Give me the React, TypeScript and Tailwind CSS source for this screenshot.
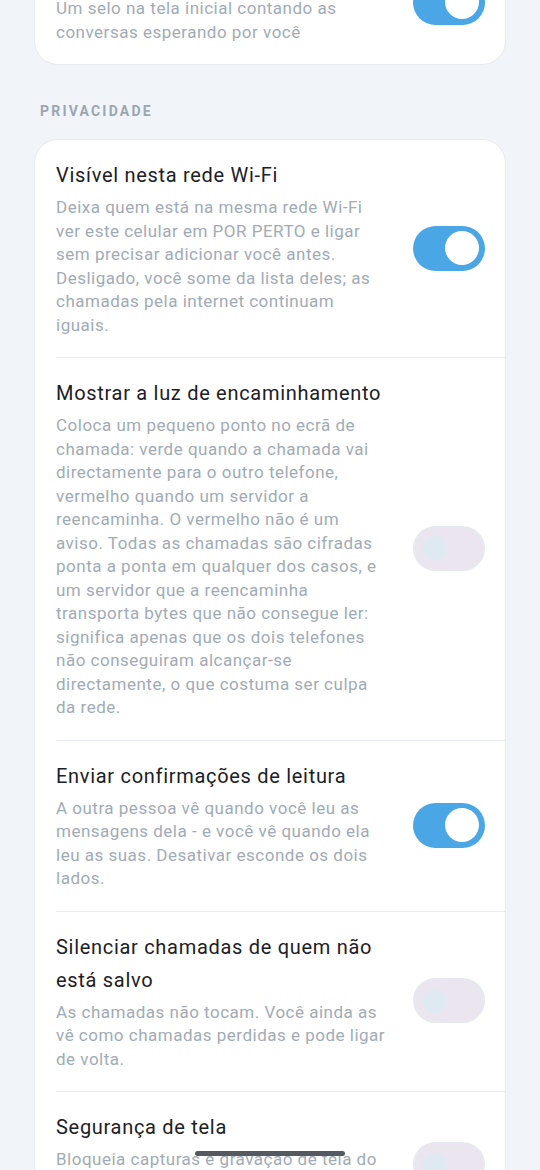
import { useState } from "react";

type Setting = {
  id: string;
  title: string;
  description: string;
  on: boolean;
  wide?: boolean;
};

const privacy: Setting[] = [
  {
    id: "wifi",
    title: "Visível nesta rede Wi-Fi",
    description:
      "Deixa quem está na mesma rede Wi-Fi ver este celular em POR PERTO e ligar sem precisar adicionar você antes. Desligado, você some da lista deles; as chamadas pela internet continuam iguais.",
    on: true,
  },
  {
    id: "relay",
    title: "Mostrar a luz de encaminhamento",
    description:
      "Coloca um pequeno ponto no ecrã de chamada: verde quando a chamada vai directamente para o outro telefone, vermelho quando um servidor a reencaminha. O vermelho não é um aviso. Todas as chamadas são cifradas ponta a ponta em qualquer dos casos, e um servidor que a reencaminha transporta bytes que não consegue ler: significa apenas que os dois telefones não conseguiram alcançar-se directamente, o que costuma ser culpa da rede.",
    on: false,
  },
  {
    id: "receipts",
    title: "Enviar confirmações de leitura",
    description:
      "A outra pessoa vê quando você leu as mensagens dela - e você vê quando ela leu as suas. Desativar esconde os dois lados.",
    on: true,
  },
  {
    id: "silence",
    title: "Silenciar chamadas de quem não está salvo",
    description:
      "As chamadas não tocam. Você ainda as\nvê como chamadas perdidas e pode ligar de volta.",
    on: false,
    wide: true,
  },
  {
    id: "screen",
    title: "Segurança de tela",
    description:
      "Bloqueia capturas e gravação de tela do aplicativo e esconde o conteúdo na lista de apps recentes.",
    on: false,
  },
];

function Toggle({ on, onClick }: { on: boolean; onClick: () => void }) {
  return (
    <button
      type="button"
      onClick={onClick}
      className={
        on
          ? "flex h-[45px] w-[72px] shrink-0 items-center justify-end rounded-full bg-[#4ba6e6] pr-[6px]"
          : "flex h-[45px] w-[72px] shrink-0 items-center justify-start rounded-full border-2 border-[#e6e9f0] bg-[#ebe5ef] pl-[8px]"
      }
    >
      <span
        className={
          on
            ? "h-[34px] w-[34px] rounded-full bg-white"
            : "h-[24px] w-[24px] rounded-full bg-[#dfe9f1]"
        }
      />
    </button>
  );
}

function Row({
  setting,
  last,
  onToggle,
}: {
  setting: Setting;
  last?: boolean;
  onToggle: () => void;
}) {
  return (
    <div className={last ? "ml-[21px]" : "ml-[21px] border-b border-[#e6eaef]"}>
      <div className="flex items-center pb-5 pr-[20px] pt-[19px]">
        <div className={setting.wide ? "w-[350px]" : "w-[329px]"}>
          <div className="text-[20px] leading-[33px] tracking-[0.7px] text-[#1b2026]">
            {setting.title}
          </div>
          <div className="mt-1 whitespace-pre-line text-[17px] leading-[23.5px] tracking-[0.5px] text-[#a1abb5]">
            {setting.description}
          </div>
        </div>
        <div className="flex-1" />
        <Toggle on={setting.on} onClick={onToggle} />
      </div>
    </div>
  );
}

export default function App() {
  const [badge, setBadge] = useState(true);
  const [items, setItems] = useState(privacy);

  return (
    <div
      className="min-h-[1170px] overflow-hidden bg-[#f1f5f9] px-[34px]"
      style={{ fontFamily: "Roboto, 'Noto Sans', sans-serif" }}
    >
      <div className="-mt-[60px] rounded-[24px] border border-[#e6ebf0] bg-white">
        <Row
          last
          setting={{
            id: "badge",
            title: "Contador no ícone",
            description:
              "Um selo na tela inicial contando as conversas esperando por você",
            on: badge,
          }}
          onToggle={() => setBadge(!badge)}
        />
      </div>

      <div className="mb-[19px] mt-[38px] pl-[6px] text-[14px] font-bold leading-[17px] tracking-[2.2px] text-[#9ba6b1]">
        PRIVACIDADE
      </div>

      <div className="rounded-[24px] border border-[#e6ebf0] bg-white">
        {items.map((s, i) => (
          <Row
            key={s.id}
            setting={s}
            last={i === items.length - 1}
            onToggle={() =>
              setItems(
                items.map((x) => (x.id === s.id ? { ...x, on: !x.on } : x))
              )
            }
          />
        ))}
      </div>

      <div className="fixed bottom-[14px] left-[195px] h-[5px] w-[150px] rounded-full bg-[#555a60]" />
    </div>
  );
}
